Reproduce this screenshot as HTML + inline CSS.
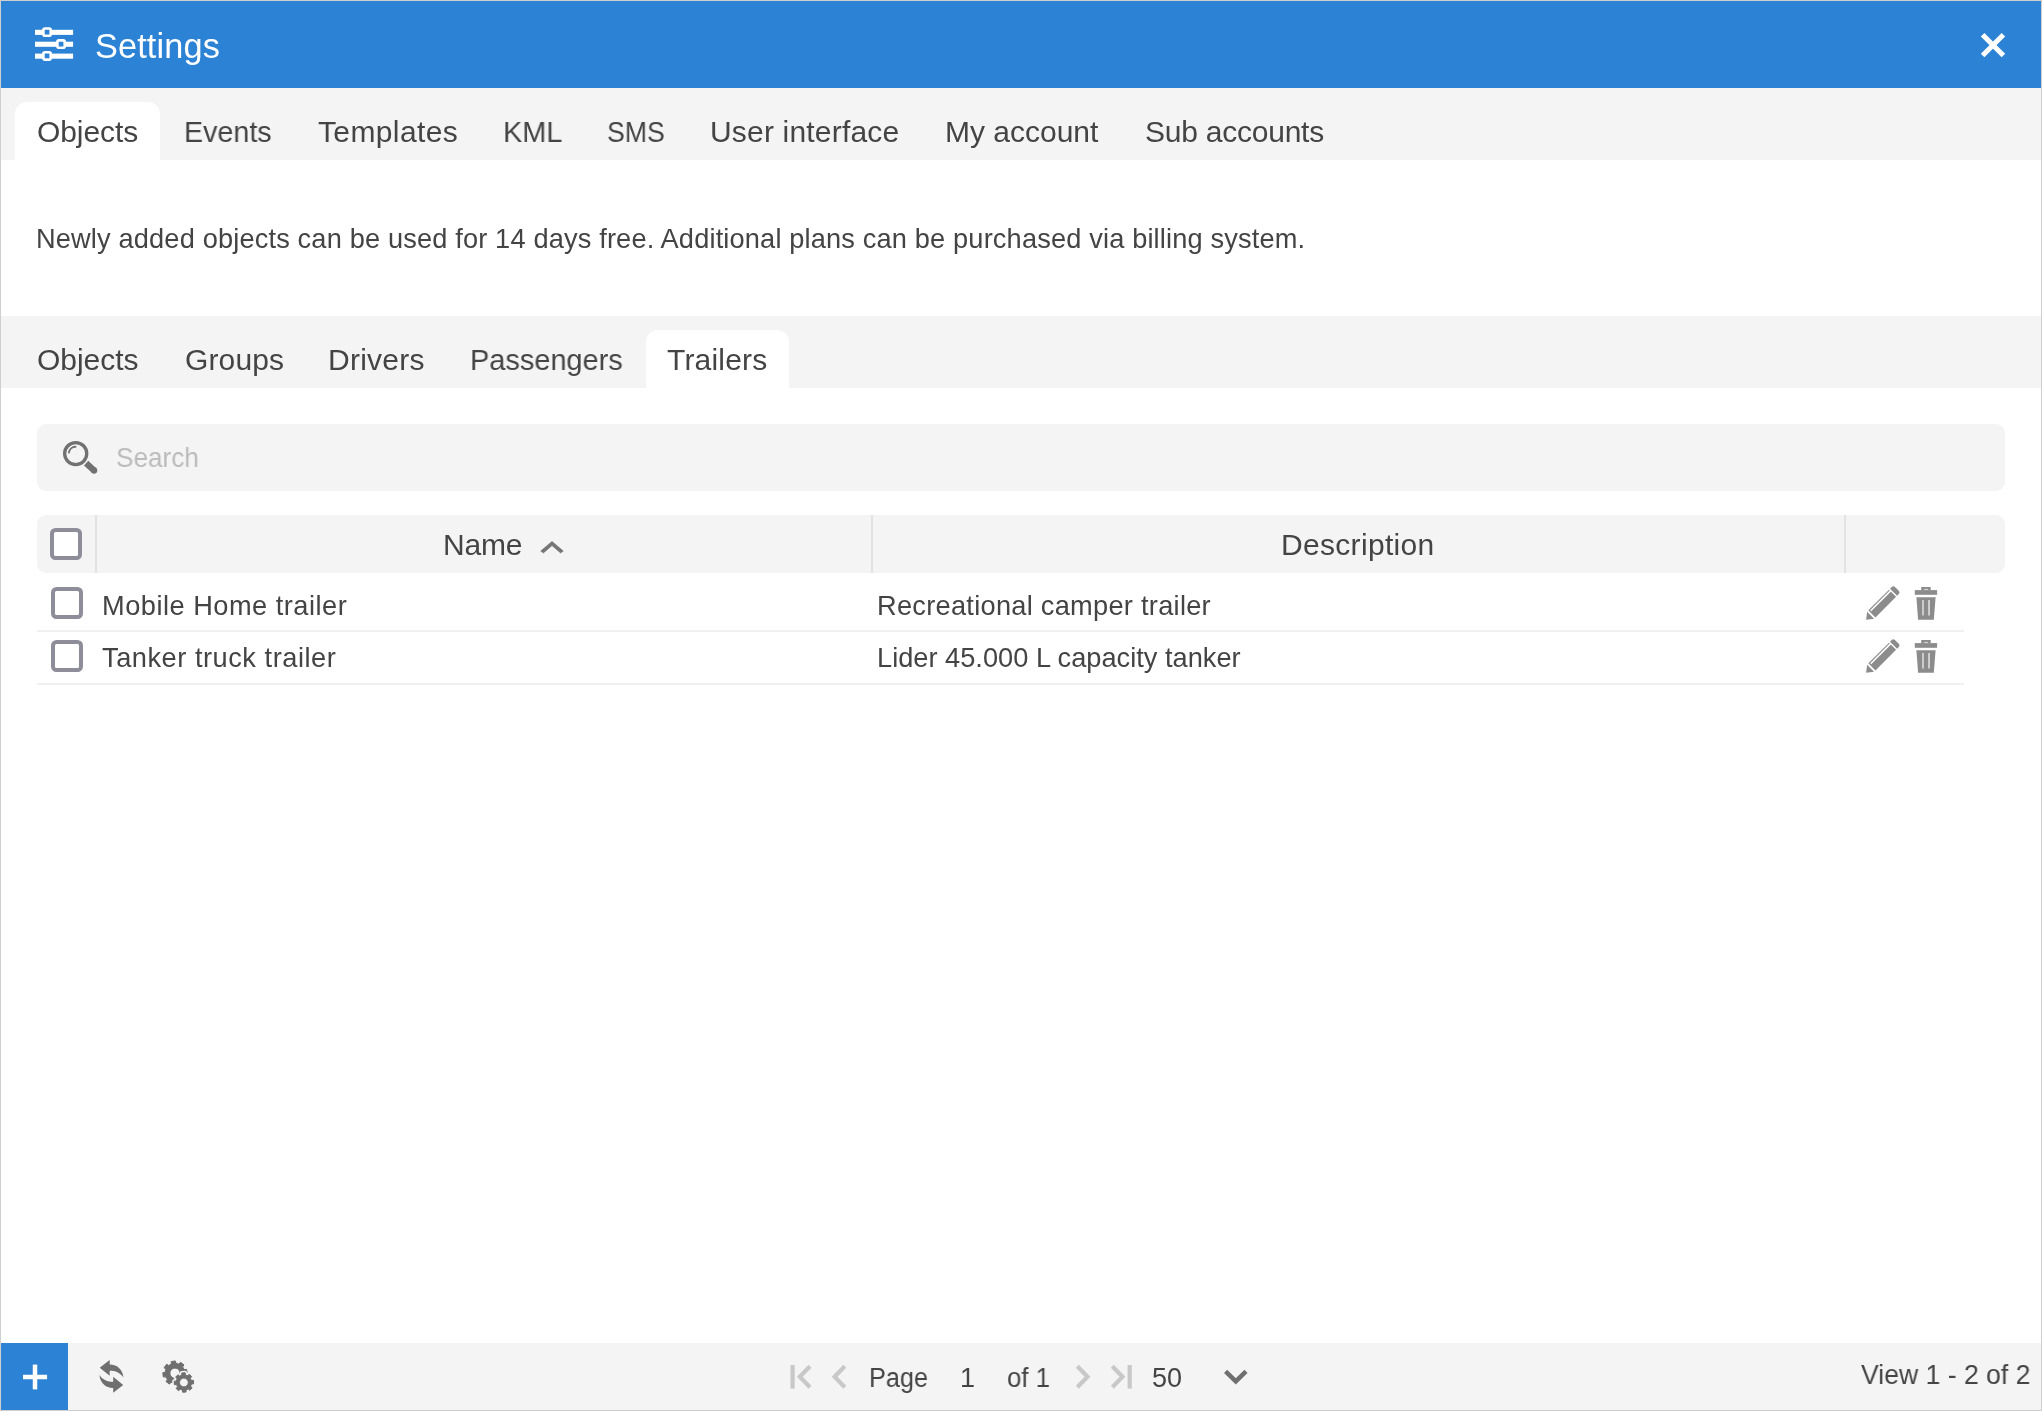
<!DOCTYPE html>
<html>
<head>
<meta charset="utf-8">
<style>
html,body{margin:0;padding:0;}
body{width:2042px;height:1411px;overflow:hidden;background:#ffffff;position:relative;font-family:"Liberation Sans",sans-serif;}
.abs{position:absolute;}
.tx{position:absolute;line-height:0;white-space:pre;font-family:"Liberation Sans",sans-serif;-webkit-font-smoothing:antialiased;will-change:transform;}
#frame{left:0;top:0;width:2042px;height:1411px;box-sizing:border-box;border:1px solid #cfcfcf;}
#hdr{left:1px;top:1px;width:2040px;height:87px;background:#2c82d4;}
#tabs{left:1px;top:88px;width:2040px;height:72px;background:#f4f4f4;}
#tabact{left:15px;top:102px;width:145px;height:58px;background:#fff;border-radius:12px 12px 0 0;}
#stabs{left:1px;top:316px;width:2040px;height:72px;background:#f4f4f4;}
#stabact{left:646px;top:330px;width:143px;height:58px;background:#fff;border-radius:12px 12px 0 0;}
#search{left:37px;top:424px;width:1968px;height:67px;background:#f4f4f4;border-radius:9px;}
#thead{left:37px;top:515px;width:1968px;height:58px;background:#f4f4f4;border-radius:9px;}
.vdiv{top:515px;width:2px;height:58px;background:#e3e3e3;}
.hline{left:37px;width:1927px;height:2px;background:#f0f0f0;}
.cb{width:24px;height:24px;border:4px solid #8e8e9b;border-radius:5.5px;background:#fff;}
#footer{left:1px;top:1343px;width:2040px;height:67px;background:#f4f4f4;}
#plus{left:1px;top:1343px;width:67px;height:67px;background:#2c82d4;}
svg{position:absolute;left:0;top:0;}
</style>
</head>
<body>
<div id="frame" class="abs"></div>
<div id="hdr" class="abs"></div>
<div id="tabs" class="abs"></div>
<div id="tabact" class="abs"></div>
<div id="stabs" class="abs"></div>
<div id="stabact" class="abs"></div>
<div id="search" class="abs"></div>
<div id="thead" class="abs"></div>
<div class="abs vdiv" style="left:95px"></div>
<div class="abs vdiv" style="left:871px"></div>
<div class="abs vdiv" style="left:1844px"></div>
<div class="abs hline" style="top:630px"></div>
<div class="abs hline" style="top:683px"></div>
<div class="abs cb" style="left:50px;top:528px"></div>
<div class="abs cb" style="left:51px;top:587px"></div>
<div class="abs cb" style="left:51px;top:640px"></div>
<div id="footer" class="abs"></div>
<div id="plus" class="abs"></div>
<svg width="2042" height="1411" viewBox="0 0 2042 1411">
  <!-- settings sliders icon -->
  <g fill="#ffffff">
    <rect x="35" y="29.8" width="38.1" height="5.1"/>
    <rect x="35" y="41.7" width="38.1" height="5.1"/>
    <rect x="35" y="53.6" width="38.1" height="5.1"/>
  </g>
  <g fill="#2c82d4" stroke="#ffffff" stroke-width="2.6">
    <rect x="43.4" y="28.5" width="7.3" height="7.3" rx="1.5"/>
    <rect x="57.4" y="40.4" width="7.3" height="7.3" rx="1.5"/>
    <rect x="43.4" y="52.3" width="7.3" height="7.3" rx="1.5"/>
  </g>
  <!-- close X -->
  <g stroke="#ffffff" stroke-width="5" stroke-linecap="butt">
    <line x1="1982.6" y1="34.8" x2="2003.4" y2="55.6"/>
    <line x1="2003.4" y1="34.8" x2="1982.6" y2="55.6"/>
  </g>
  <!-- search icon -->
  <g stroke="#717171" fill="none">
    <circle cx="75.7" cy="453.6" r="11.05" stroke-width="3.3"/>
    <path d="M68.95 452.6 A6.8 6.8 0 0 1 75.5 446.8" stroke-width="1.9" stroke-linecap="round"/>
  </g>
  <g fill="#717171">
    <polygon points="83.96,465.41 88.24,460.79 96.24,468.19 91.96,472.81"/>
    <circle cx="94.1" cy="470.5" r="3.15"/>
  </g>
  <!-- sort caret -->
  <polygon points="540.8,551 552,541.4 563.2,551 560.6,552.9 552,545.6 543.4,552.9" fill="#757575" stroke="#757575" stroke-width="0.7" stroke-linejoin="round"/>
  <!-- pencil + trash rows -->
  <g id="icons1" fill="#8c8c8c">
    <g transform="translate(1866.1 619.7) rotate(-45)"><polygon points="0,0 6.4,-4.9 6.4,4.9"/><polygon points="8.2,-5 37.4,-5 37.4,5 8.2,5"/><rect x="9.6" y="-3.9" width="28.4" height="1.5" fill="#ffffff"/><path d="M38.8 -5 L41.2 -5 Q43.5 -5 43.5 -2.7 L43.5 2.7 Q43.5 5 41.2 5 L38.8 5 Z"/></g><g transform="translate(0 0)"><path d="M1921.2 587 H1930.7 V590.4 H1921.2 Z " /><rect x="1924.1" y="588.9" width="4" height="1.3" fill="#d2d2d2"/><rect x="1914.8" y="590.1" width="22.3" height="4.7"/><polygon points="1916.4,597.2 1935.6,597.2 1933.8,619.7 1918.1,619.7"/><rect x="1922.1" y="600" width="1.8" height="15.5" fill="#d2d2d2"/><rect x="1928.1" y="600" width="1.9" height="15.5" fill="#d2d2d2"/></g><g transform="translate(1866.1 672.7) rotate(-45)"><polygon points="0,0 6.4,-4.9 6.4,4.9"/><polygon points="8.2,-5 37.4,-5 37.4,5 8.2,5"/><rect x="9.6" y="-3.9" width="28.4" height="1.5" fill="#ffffff"/><path d="M38.8 -5 L41.2 -5 Q43.5 -5 43.5 -2.7 L43.5 2.7 Q43.5 5 41.2 5 L38.8 5 Z"/></g><g transform="translate(0 53)"><path d="M1921.2 587 H1930.7 V590.4 H1921.2 Z " /><rect x="1924.1" y="588.9" width="4" height="1.3" fill="#d2d2d2"/><rect x="1914.8" y="590.1" width="22.3" height="4.7"/><polygon points="1916.4,597.2 1935.6,597.2 1933.8,619.7 1918.1,619.7"/><rect x="1922.1" y="600" width="1.8" height="15.5" fill="#d2d2d2"/><rect x="1928.1" y="600" width="1.9" height="15.5" fill="#d2d2d2"/></g>
  </g>
  <!-- plus -->
  <g fill="#ffffff">
    <rect x="23" y="1374.75" width="24.1" height="4.5"/>
    <rect x="32.75" y="1364.6" width="4.5" height="24.8"/>
  </g>
  <!-- refresh -->
  <g fill="#6f6f6f">
    <path id="arrA" d="M99.7 1367.7 L109.7 1359.9 L109.7 1364.6 C117.5 1364.6 122.8 1370 123.5 1377.6 C120 1372.6 115.5 1370.8 109.7 1370.8 L109.7 1375.8 Z"/>
    <use href="#arrA" transform="rotate(180 111.45 1376.3)"/>
  </g>
  <!-- gears -->
  <g fill="#6f6f6f" stroke="#6f6f6f" stroke-width="1" stroke-linejoin="round"><path fill-rule="evenodd" d="M171.37 1363.99 L171.19 1361.56 L175.45 1360.96 L175.95 1363.35 L178.95 1364.12 L180.54 1362.27 L183.98 1364.87 L182.64 1366.90 L184.21 1369.57 L186.64 1369.39 L187.24 1373.65 L184.85 1374.15 L184.08 1377.15 L185.93 1378.74 L183.33 1382.18 L181.30 1380.84 L178.63 1382.41 L178.81 1384.84 L174.55 1385.44 L174.05 1383.05 L171.05 1382.28 L169.46 1384.13 L166.02 1381.53 L167.36 1379.50 L165.79 1376.83 L163.36 1377.01 L162.76 1372.75 L165.15 1372.25 L165.92 1369.25 L164.07 1367.66 L166.67 1364.22 L168.70 1365.56 Z M180.10 1373.20 A5.1 5.1 0 1 0 169.90 1373.20 A5.1 5.1 0 1 0 180.10 1373.20 Z"/><path d="M181.78 1375.10 L181.76 1372.94 L185.20 1372.79 L185.37 1374.94 L187.63 1375.77 L189.15 1374.22 L191.69 1376.55 L190.28 1378.19 L191.30 1380.38 L193.46 1380.36 L193.61 1383.80 L191.46 1383.97 L190.63 1386.23 L192.18 1387.75 L189.85 1390.29 L188.21 1388.88 L186.02 1389.90 L186.04 1392.06 L182.60 1392.21 L182.43 1390.06 L180.17 1389.23 L178.65 1390.78 L176.11 1388.45 L177.52 1386.81 L176.50 1384.62 L174.34 1384.64 L174.19 1381.20 L176.34 1381.03 L177.17 1378.77 L175.62 1377.25 L177.95 1374.71 L179.59 1376.12 Z" fill="#f4f4f4" stroke="#f4f4f4" stroke-width="4"/><path fill-rule="evenodd" d="M181.78 1375.10 L181.76 1372.94 L185.20 1372.79 L185.37 1374.94 L187.63 1375.77 L189.15 1374.22 L191.69 1376.55 L190.28 1378.19 L191.30 1380.38 L193.46 1380.36 L193.61 1383.80 L191.46 1383.97 L190.63 1386.23 L192.18 1387.75 L189.85 1390.29 L188.21 1388.88 L186.02 1389.90 L186.04 1392.06 L182.60 1392.21 L182.43 1390.06 L180.17 1389.23 L178.65 1390.78 L176.11 1388.45 L177.52 1386.81 L176.50 1384.62 L174.34 1384.64 L174.19 1381.20 L176.34 1381.03 L177.17 1378.77 L175.62 1377.25 L177.95 1374.71 L179.59 1376.12 Z M188.30 1382.50 A4.4 4.4 0 1 0 179.50 1382.50 A4.4 4.4 0 1 0 188.30 1382.50 Z"/></g>
  <!-- pager -->
  <g stroke="#c8c8c8" stroke-width="4.2" fill="none" stroke-linejoin="miter">
    <line x1="792.6" y1="1365" x2="792.6" y2="1388.6"/>
    <polyline points="810,1366.3 799.8,1376.8 810,1387.3"/>
    <polyline points="844.8,1366.3 834.6,1376.8 844.8,1387.3"/>
    <polyline points="1077.3,1366.3 1087.5,1376.8 1077.3,1387.3"/>
    <polyline points="1112.3,1366.3 1122.5,1376.8 1112.3,1387.3"/>
    <line x1="1129.7" y1="1365" x2="1129.7" y2="1388.6"/>
  </g>
  <polyline points="1225.6,1371.3 1235.8,1381.3 1246,1371.3" fill="none" stroke="#6f6f6f" stroke-width="4.5" stroke-linejoin="miter"/>
</svg>
<div class="tx" style="left:94.80px;top:46.42px;font-size:34.3px;letter-spacing:0.132px;color:#ffffff;">Settings</div>
<div class="tx" style="left:37.20px;top:132.10px;font-size:30.0px;letter-spacing:-0.084px;color:#444444;">Objects</div>
<div class="tx" style="left:184.39px;top:132.10px;font-size:30.0px;transform:scaleX(0.9548);transform-origin:0 0;color:#444444;">Events</div>
<div class="tx" style="left:318.00px;top:132.10px;font-size:30.0px;letter-spacing:0.371px;color:#444444;">Templates</div>
<div class="tx" style="left:502.77px;top:132.10px;font-size:30.0px;transform:scaleX(0.9627);transform-origin:0 0;color:#444444;">KML</div>
<div class="tx" style="left:607.11px;top:132.10px;font-size:30.0px;transform:scaleX(0.8889);transform-origin:0 0;color:#444444;">SMS</div>
<div class="tx" style="left:709.90px;top:132.10px;font-size:30.0px;letter-spacing:0.188px;color:#444444;">User interface</div>
<div class="tx" style="left:944.70px;top:132.10px;font-size:30.0px;letter-spacing:-0.007px;color:#444444;">My account</div>
<div class="tx" style="left:1144.80px;top:132.10px;font-size:30.0px;letter-spacing:-0.235px;color:#444444;">Sub accounts</div>
<div class="tx" style="left:36.00px;top:238.58px;font-size:27.2px;letter-spacing:0.159px;color:#444444;">Newly added objects can be used for 14 days free. Additional plans can be purchased via billing system.</div>
<div class="tx" style="left:37.00px;top:360.21px;font-size:30.0px;letter-spacing:-0.034px;color:#444444;">Objects</div>
<div class="tx" style="left:184.50px;top:360.21px;font-size:30.0px;letter-spacing:0.124px;color:#444444;">Groups</div>
<div class="tx" style="left:327.90px;top:360.21px;font-size:30.0px;letter-spacing:0.251px;color:#444444;">Drivers</div>
<div class="tx" style="left:469.67px;top:360.21px;font-size:30.0px;transform:scaleX(0.9638);transform-origin:0 0;color:#444444;">Passengers</div>
<div class="tx" style="left:667.40px;top:360.21px;font-size:30.0px;letter-spacing:0.187px;color:#444444;">Trailers</div>
<div class="tx" style="left:115.94px;top:457.58px;font-size:27.2px;transform:scaleX(0.9617);transform-origin:0 0;color:#bbbbbb;">Search</div>
<div class="tx" style="left:442.70px;top:545.11px;font-size:30.0px;letter-spacing:-0.180px;color:#444444;">Name</div>
<div class="tx" style="left:1280.70px;top:545.11px;font-size:30.0px;letter-spacing:0.313px;color:#444444;">Description</div>
<div class="tx" style="left:102.00px;top:605.58px;font-size:27.2px;letter-spacing:0.503px;color:#444444;">Mobile Home trailer</div>
<div class="tx" style="left:877.00px;top:605.78px;font-size:27.2px;letter-spacing:0.280px;color:#444444;">Recreational camper trailer</div>
<div class="tx" style="left:101.70px;top:657.88px;font-size:27.2px;letter-spacing:0.534px;color:#444444;">Tanker truck trailer</div>
<div class="tx" style="left:877.00px;top:657.88px;font-size:27.2px;letter-spacing:0.014px;color:#444444;">Lider 45.000 L capacity tanker</div>
<div class="tx" style="left:868.63px;top:1377.84px;font-size:27.0px;transform:scaleX(0.9360);transform-origin:0 0;color:#444444;">Page</div>
<div class="tx" style="left:960.00px;top:1377.84px;font-size:27.0px;letter-spacing:0.000px;color:#444444;">1</div>
<div class="tx" style="left:1006.94px;top:1377.84px;font-size:27.0px;transform:scaleX(0.9554);transform-origin:0 0;color:#444444;">of 1</div>
<div class="tx" style="left:1152.20px;top:1377.84px;font-size:27.0px;letter-spacing:-0.016px;color:#444444;">50</div>
<div class="tx" style="left:1861.00px;top:1375.47px;font-size:27.8px;transform:scaleX(0.9563);transform-origin:0 0;color:#444444;">View 1 - 2 of 2</div>
</body>
</html>
